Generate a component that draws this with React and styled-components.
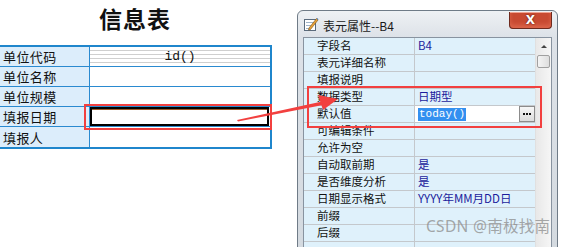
import React from "react";
import styled, { createGlobalStyle } from "styled-components";

const GlobalStyle = createGlobalStyle`
  html, body { margin: 0; padding: 0; background: #fff; }
  body { font-family: "Noto Sans CJK SC", "Noto Sans", sans-serif; }
`;

const Stage = styled.div`
  position: relative;
  width: 576px;
  height: 247px;
  overflow: hidden;
  display: flex;
  align-items: flex-start;
  background: #fff;
`;

/* ---------- left sheet ---------- */
const Sheet = styled.div`
  flex: none;
  width: 274px;
  margin-left: -2px;
  display: flex;
  flex-direction: column;
`;

const SheetTitle = styled.div`
  height: 45px;
  display: flex;
  align-items: center;
  justify-content: center;
  padding-bottom: 9px;
  box-sizing: border-box;
  font-size: 23px;
  font-weight: 700;
  letter-spacing: 1px;
  color: #111;
  font-family: "Noto Sans CJK SC", sans-serif;
`;

const Table = styled.div`
  border: 2px solid #1f86cc;
  display: flex;
  flex-direction: column;
`;

const TRow = styled.div`
  display: grid;
  grid-template-columns: 89px 1fr;
  height: 20px;
  box-sizing: border-box;
  border-bottom: ${(p) => (p.$last ? "none" : "1px solid #2a8ad0")};
`;

const TLabel = styled.div`
  background: #dcedfb;
  padding-left: 3px;
  display: flex;
  align-items: center;
  font-size: 13px;
  letter-spacing: 0.4px;
  color: #111;
`;

const TValue = styled.div`
  border-left: 1px solid #2a8ad0;
  background: ${(p) =>
    p.$ruled
      ? "repeating-linear-gradient(to bottom, #fff 0 3px, #cfcfcf 3px 4px)"
      : "#fff"};
  display: flex;
  align-items: center;
  justify-content: center;
  font-family: "Liberation Mono", monospace;
  font-size: 13px;
  color: #111;
`;

const SelectedCell = styled.div`
  flex: 1;
  align-self: stretch;
  margin: 0 1px 0 0;
  border: 2px solid #000;
  box-shadow: inset 0 1px 0 #9a5a2a;
  background: #fff;
`;

/* ---------- property window ---------- */
const Win = styled.div`
  flex: none;
  margin-left: 25px;
  margin-top: 10px;
  width: 261px;
  height: 260px;
  box-sizing: border-box;
  border: 1px solid #6f7b87;
  border-radius: 6px 6px 0 0;
  background: linear-gradient(to bottom, #eef1f4 0, #dde2e8 26px, #d3d9df 100%);
  padding: 0 5px;
  display: flex;
  flex-direction: column;
`;

const TitleBar = styled.div`
  height: 26px;
  display: grid;
  grid-template-columns: 20px 1fr 43px;
  align-items: center;
`;

const TitleText = styled.span`
  font-size: 12px;
  color: #1a1a1a;
  margin-top: 2px;
`;

const CloseBtn = styled.div`
  align-self: start;
  margin-top: 1px;
  height: 17px;
  border: 1px solid #6e2a1e;
  border-top: none;
  border-radius: 0 0 4px 4px;
  box-sizing: border-box;
  background-color: #c84a32;
  box-shadow: inset 0 1px 0 rgba(255, 200, 185, 0.7), inset 0 -3px 4px rgba(240, 130, 100, 0.5);
  display: flex;
  align-items: center;
  justify-content: center;
  color: #fff;
  font-family: "DejaVu Sans", sans-serif;
  font-weight: 700;
  font-size: 12px;
  line-height: 1;
  text-shadow: 0 0 2px #4a140c;
`;

const Grid = styled.div`
  flex: 1;
  border: 1px solid #8893a0;
  display: flex;
  background: #fff;
`;

const Rows = styled.div`
  width: 231px;
  display: flex;
  flex-direction: column;
`;

const PRow = styled.div`
  display: grid;
  grid-template-columns: 110px 1fr;
  height: 17px;
  box-sizing: border-box;
  border-bottom: 1px solid #c4c8cc;
  background: #dff1fb;
`;

const PLabel = styled.div`
  padding-left: 13px;
  display: flex;
  align-items: center;
  font-size: 11.5px;
  color: #111;
  line-height: 1;
`;

const PValue = styled.div`
  border-left: 1px solid #c4c8cc;
  padding-left: 3px;
  display: flex;
  align-items: center;
  font-size: 11.5px;
  color: #1c1c9c;
  line-height: 1;
`;

const EditBox = styled.div`
  flex: 1;
  align-self: stretch;
  display: flex;
  align-items: center;
  background: #fff;
  margin-left: -3px;
  padding-left: 3px;
`;

const Selected = styled.span`
  background: #3390f0;
  color: #fff;
  font-family: "Liberation Mono", monospace;
  font-size: 11px;
  padding: 1px 1px;
`;

const DotsBtn = styled.div`
  flex: 0 0 16px;
  align-self: stretch;
  box-sizing: border-box;
  border: 1px solid #8c8c8c;
  background: linear-gradient(#f7f7f7, #dcdcdc);
  display: flex;
  align-items: center;
  justify-content: center;
  gap: 1px;
`;

const Dot = styled.span`
  width: 2px;
  height: 2px;
  background: #111;
`;

const ScrollBar = styled.div`
  width: 16px;
  background: linear-gradient(to right, #e8e8e8, #f6f6f6);
  border-left: 1px solid #e0e0e0;
  box-sizing: border-box;
  display: flex;
  flex-direction: column;
  align-items: center;
`;

const ScrollArrow = styled.div`
  margin-top: 7px;
  width: 0;
  height: 0;
  border-left: 3px solid transparent;
  border-right: 3px solid transparent;
  border-bottom: 3px solid #444;
`;

const Thumb = styled.div`
  margin-top: 7px;
  width: 13px;
  height: 13px;
  box-sizing: border-box;
  border: 1px solid #a0a0a0;
  border-radius: 2px;
  background: linear-gradient(to right, #f4f4f4, #dedede);
`;

/* ---------- annotations ---------- */
const Highlight = styled.div`
  position: absolute;
  left: ${(p) => p.$x}px;
  top: ${(p) => p.$y}px;
  width: ${(p) => p.$w}px;
  height: ${(p) => p.$h}px;
  box-sizing: border-box;
  border: 2px solid #f2403f;
  pointer-events: none;
`;

const Arrow = styled.svg`
  position: absolute;
  left: 0;
  top: 0;
  pointer-events: none;
`;

const Watermark = styled.div`
  position: absolute;
  left: 426px;
  top: 214px;
  font-family: "Noto Sans", "Noto Sans CJK SC", sans-serif;
  font-size: 15.5px;
  color: rgba(140, 140, 140, 0.75);
  letter-spacing: 0.3px;
  white-space: nowrap;
`;

const sheetRows = [
  { label: "单位代码", value: "id()", ruled: true },
  { label: "单位名称" },
  { label: "单位规模" },
  { label: "填报日期", selected: true },
  { label: "填报人" },
];

const props = [
  { label: "字段名", value: "B4" },
  { label: "表元详细名称" },
  { label: "填报说明" },
  { label: "数据类型", value: "日期型" },
  { label: "默认值", edit: "today()" },
  { label: "可编辑条件" },
  { label: "允许为空" },
  { label: "自动取前期", value: "是" },
  { label: "是否维度分析", value: "是" },
  { label: "日期显示格式", value: "YYYY年MM月DD日" },
  { label: "前缀" },
  { label: "后缀" },
  { label: "" },
];

function TitleIcon() {
  return (
    <svg width="16" height="16" viewBox="0 0 16 16">
      <rect x="1.5" y="3.5" width="11" height="11" fill="#fff" stroke="#5a6b7d" />
      <line x1="3" y1="6.5" x2="11" y2="6.5" stroke="#9fb4c8" />
      <line x1="3" y1="9.5" x2="9" y2="9.5" stroke="#9fb4c8" />
      <line x1="3" y1="12.5" x2="7" y2="12.5" stroke="#9fb4c8" />
      <path d="M6 12 L13.5 2.5 L15 4 L7.5 13.5 L5.5 14 Z" fill="#e8a23a" stroke="#7a5010" strokeWidth="0.6" />
      <path d="M13.5 2.5 L15 4 L15.5 3.2 L14.3 1.9 Z" fill="#4a7fc0" />
    </svg>
  );
}

export default function App() {
  return (
    <>
      <GlobalStyle />
      <Stage>
        <Sheet>
          <SheetTitle>信息表</SheetTitle>
          <Table>
            {sheetRows.map((r, i) => (
              <TRow key={r.label} $last={i === sheetRows.length - 1}>
                <TLabel>{r.label}</TLabel>
                <TValue $ruled={r.ruled}>
                  {r.selected ? <SelectedCell /> : r.value}
                </TValue>
              </TRow>
            ))}
          </Table>
        </Sheet>

        <Win>
          <TitleBar>
            <TitleIcon />
            <TitleText>表元属性--B4</TitleText>
            <CloseBtn>X</CloseBtn>
          </TitleBar>
          <Grid>
            <Rows>
              {props.map((p, i) => (
                <PRow key={i}>
                  <PLabel>{p.label}</PLabel>
                  <PValue>
                    {p.edit ? (
                      <>
                        <EditBox>
                          <Selected>{p.edit}</Selected>
                        </EditBox>
                        <DotsBtn>
                          <Dot />
                          <Dot />
                          <Dot />
                        </DotsBtn>
                      </>
                    ) : (
                      p.value
                    )}
                  </PValue>
                </PRow>
              ))}
            </Rows>
            <ScrollBar>
              <ScrollArrow />
              <Thumb />
            </ScrollBar>
          </Grid>
        </Win>

        <Highlight $x={84} $y={104} $w={188} $h={26} />
        <Highlight $x={307} $y={86} $w={235} $h={42} />
        <Arrow width="576" height="247">
          <polygon points="237,120 322,101.5 323,105 238,121.5" fill="#f2403f" />
          <polygon points="338,99 318,95 323,110" fill="#f2403f" />
        </Arrow>
        <Watermark>CSDN @南极找南</Watermark>
      </Stage>
    </>
  );
}
